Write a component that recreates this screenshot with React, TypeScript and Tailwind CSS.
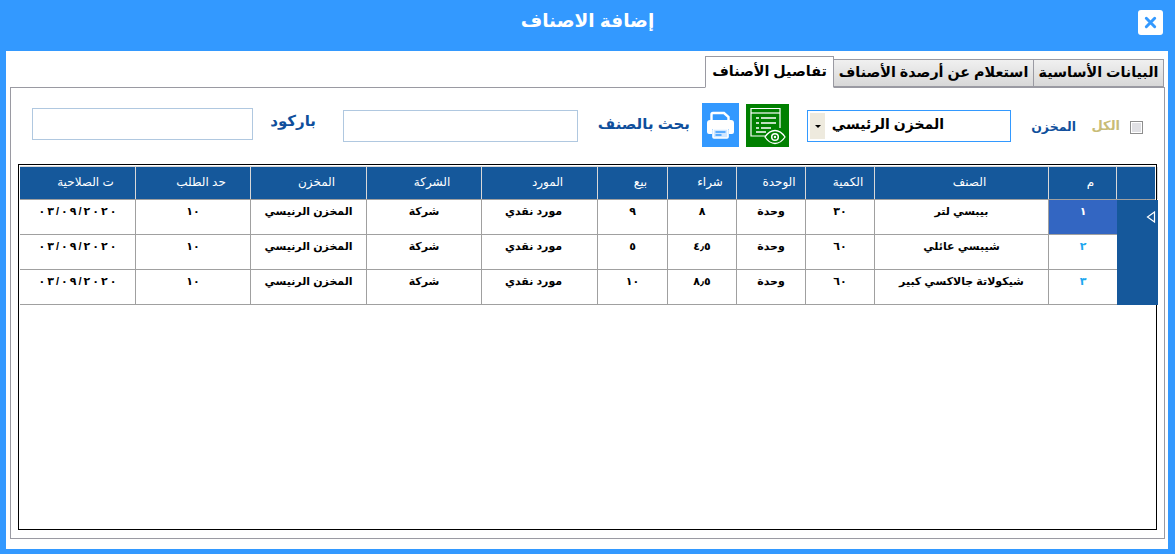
const font = "font-['Liberation_Sans','DejaVu_Sans',sans-serif]";

const columns = ['ت الصلاحية', 'حد الطلب', 'المخزن', 'الشركة', 'المورد', 'بيع', 'شراء', 'الوحدة', 'الكمية', 'الصنف', 'م'];

const rows = [
  { name: 'بيبسي لتر', qty: '٣٠', buy: '٨', sell: '٩', num: '١' },
  { name: 'شيبسي عائلي', qty: '٦٠', buy: '٤٫٥', sell: '٥', num: '٢' },
  { name: 'شيكولاتة جالاكسي كبير', qty: '٦٠', buy: '٨٫٥', sell: '١٠', num: '٣' },
];

const gridCols = 'grid grid-cols-[116px_115px_116px_115px_116px_70px_69px_69px_69px_174px_68px_41px]';

function Tab({ label, active, className }: { label: string; active?: boolean; className: string }) {
  return (
    <div
      dir="rtl"
      className={`flex items-center justify-center whitespace-nowrap border border-[#9a9aa2] text-[14.3px] font-bold text-black ${
        active ? 'z-10 -mb-px h-[32px] border-b-white bg-white' : 'h-[28px] bg-[linear-gradient(#f0f0f0,#d8d8d8)]'
      } ${className}`}
    >
      {label}
    </div>
  );
}

function PrinterIcon() {
  return (
    <svg viewBox="0 0 37 44" className="h-[44px] w-[37px]">
      <path d="M9.500 18v-6.500a1.500 1.500 0 0 1 1.500-1.500h11l4.500 4v4" fill="none" stroke="#fff" strokeWidth="2.400" />
      <path d="M8 17h21a3 3 0 0 1 3 3v9a2 2 0 0 1-2 2h-3v-5H10v5H7a2 2 0 0 1-2-2v-9a3 3 0 0 1 3-3z" fill="#fff" />
      <rect x="11" y="26" width="15" height="9" rx="1" fill="#cfe6ff" stroke="#fff" strokeWidth="1.600" />
      <path d="M13.500 29h10M13.500 32h6" stroke="#3399ff" strokeWidth="1.300" />
    </svg>
  );
}

function ReportEyeIcon() {
  return (
    <svg viewBox="0 0 43 43" className="h-[43px] w-[43px]" fill="none" stroke="#fff">
      <path d="M21 32H5V4.500h29V24" strokeWidth="1.200" />
      <path d="M5 9h29" strokeWidth="1.200" />
      <path d="M10 14h3M10 19h3M10 24h3M15 14h15M15 19h15M15 24h10M10 28h10" strokeWidth="1.500" />
      <path d="M19 33c3-4.500 6.500-6.500 10-6.500s7 2 10 6.500c-3 4.500-6.500 6.500-10 6.500s-7-2-10-6.500z" fill="#008000" strokeWidth="1.300" />
      <circle cx="29" cy="33" r="3.300" strokeWidth="1.500" />
      <circle cx="29" cy="33" r="1.200" fill="#fff" stroke="none" />
    </svg>
  );
}

// letter-spacing does nothing on these digits, so the date is spaced with a flex gap
function DateText({ value }: { value: string }) {
  return (
    <span dir="ltr" className="flex gap-[2px]">
      {value.split('').map((ch, i) => (
        <span key={i}>{ch}</span>
      ))}
    </span>
  );
}

export default function App() {
  return (
    <div className={`flex h-[554px] w-[1175px] flex-col overflow-hidden bg-[#3399ff] ${font}`}>
      <header className="relative flex h-[51px] items-center justify-center">
        <h1 dir="rtl" className="pb-[10px] text-[18.5px] font-bold text-white">إضافة الاصناف</h1>
        <button className="absolute left-[1138px] top-[10px] flex h-[25px] w-[25px] items-center justify-center rounded-[3px] bg-white">
          <svg viewBox="0 0 14 14" className="h-[13px] w-[13px]">
            <path d="M2.500 2.500l9 9M11.500 2.500l-9 9" stroke="#3399ff" strokeWidth="3.200" strokeLinecap="round" />
          </svg>
        </button>
      </header>

      <main className="mb-[5px] ml-[6px] mr-[7px] flex flex-1 flex-col bg-white pb-[10px] pl-[4px] pr-[3px] pt-[4px]">
        <div className="flex h-[32px] items-end justify-end pr-[1px]">
          <Tab label="تفاصيل الأصناف" active className="w-[129px]" />
          <Tab label="استعلام عن أرصدة الأصناف" className="-ml-px w-[201px]" />
          <Tab label="البيانات الأساسية" className="-ml-px w-[131px]" />
        </div>

        <section className="flex flex-1 flex-col border border-[#9a9aa2] px-[7px] pb-[8px]">
          <div className="flex h-[76px] items-start pl-[14px]">
            <input className="mt-[20px] h-[32px] w-[221px] border border-[#b0c8e0]" />
            <span dir="rtl" className="ml-[17px] mt-[22px] w-[46px] whitespace-nowrap text-[15px] font-bold text-[#0f4f9c]">باركود</span>
            <input className="ml-[27px] mt-[22px] h-[32px] w-[235px] border border-[#b0c8e0]" />
            <span dir="rtl" className="ml-[21px] mt-[25px] w-[91px] whitespace-nowrap text-[15px] font-bold text-[#0f4f9c]">بحث بالصنف</span>
            <button className="ml-[12px] mt-[15px] h-[44px] w-[37px] bg-[#3399ff]"><PrinterIcon /></button>
            <button className="ml-[7px] mt-[16px] h-[43px] w-[43px] bg-[#008000]"><ReportEyeIcon /></button>
            <div className="ml-[18px] mt-[22px] flex h-[32px] w-[204px] items-center border border-[#3399ff] pl-[2px]">
              <span className="flex h-[26px] w-[15px] items-center justify-center bg-[#eeeade]">
                <span className="border-x-[3px] border-t-[3px] border-x-transparent border-t-black" />
              </span>
              <span dir="rtl" className="ml-[8px] mt-[-3px] w-[111px] whitespace-nowrap text-[14px] font-bold text-black">المخزن الرئيسي</span>
            </div>
            <span dir="rtl" className="ml-[20px] mt-[30px] w-[45px] whitespace-nowrap text-[12.5px] font-bold text-[#0f4f9c]">المخزن</span>
            <span dir="rtl" className="ml-[17px] mt-[28px] w-[27px] whitespace-nowrap text-[13px] font-bold text-[#c8bc78]">الكل</span>
            <span className="ml-[10px] mt-[33px] flex h-[13px] w-[13px] items-center justify-center border border-[#8e8e8e] bg-white">
              <span className="h-[9px] w-[9px] bg-[#e0e0e4]" />
            </span>
          </div>

          <div className="flex-1 border border-black p-[1px]">
            <div className={`${gridCols} h-[34px] border-y border-t-[#d8d8d8] border-b-[#a0a0a0] bg-[#15589b] text-[12px] text-white`}>
              {columns.map((col) => (
                <div key={col} dir="rtl" className="flex items-center justify-center border-r border-[#d8d8d8] pb-[2px] pl-[16px]">{col}</div>
              ))}
              <div className="border-r border-[#d8d8d8]" />
            </div>
            {rows.map((row, i) => (
              <div key={row.num} className={`${gridCols} h-[35px] text-[11px] font-bold text-black`}>
                {[<DateText value="٠٣/٠٩/٢٠٢٠" />, '١٠', 'المخزن الرنيسي', 'شركة', 'مورد نقدي', row.sell, row.buy, 'وحدة', row.qty, row.name].map((cell, c) => (
                  <div key={c} dir="rtl" className={`flex justify-center whitespace-nowrap border-b border-r border-[#a0a0a0] pt-[3px] ${c === 4 ? 'pr-[12px]' : ''}`}>{cell}</div>
                ))}
                <div className={`flex justify-center border-b border-[#a0a0a0] pt-[3px] ${i === 0 ? 'bg-[#3366c2] text-white' : 'text-[#1ea7ef]'}`}>{row.num}</div>
                <div className="relative bg-[#15589b]">
                  {i === 0 && (
                    <svg viewBox="0 0 10 12" className="absolute left-[29px] top-[11px] h-[12px] w-[10px]">
                      <path d="M8.500 1v10L1.500 6z" fill="#15589b" stroke="#fff" strokeWidth="1.200" />
                    </svg>
                  )}
                </div>
              </div>
            ))}
          </div>
        </section>
      </main>
    </div>
  );
}
